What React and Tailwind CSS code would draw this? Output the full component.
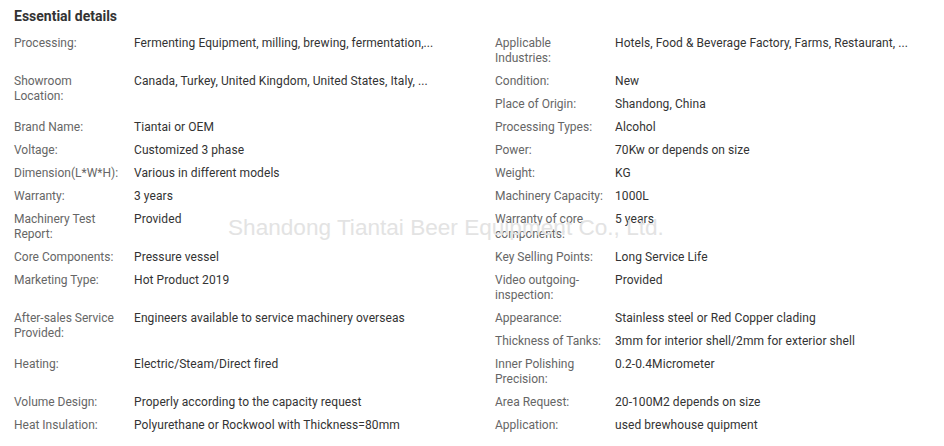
import React from "react";

const rows = [
  [
    [["Processing:", "Fermenting Equipment, milling, brewing, fermentation,..."]],
    [["Applicable Industries:", "Hotels, Food & Beverage Factory, Farms, Restaurant, ..."]],
  ],
  [
    [["Showroom Location:", "Canada, Turkey, United Kingdom, United States, Italy, ..."]],
    [
      ["Condition:", "New"],
      ["Place of Origin:", "Shandong, China"],
    ],
  ],
  [[["Brand Name:", "Tiantai or OEM"]], [["Processing Types:", "Alcohol"]]],
  [[["Voltage:", "Customized 3 phase"]], [["Power:", "70Kw or depends on size"]]],
  [[["Dimension(L*W*H):", "Various in different models"]], [["Weight:", "KG"]]],
  [[["Warranty:", "3 years"]], [["Machinery Capacity:", "1000L"]]],
  [[["Machinery Test Report:", "Provided"]], [["Warranty of core components:", "5 years"]]],
  [[["Core Components:", "Pressure vessel"]], [["Key Selling Points:", "Long Service Life"]]],
  [[["Marketing Type:", "Hot Product 2019"]], [["Video outgoing-inspection:", "Provided"]]],
  [
    [["After-sales Service Provided:", "Engineers available to service machinery overseas"]],
    [
      ["Appearance:", "Stainless steel or Red Copper clading"],
      ["Thickness of Tanks:", "3mm for interior shell/2mm for exterior shell"],
    ],
  ],
  [[["Heating:", "Electric/Steam/Direct fired"]], [["Inner Polishing Precision:", "0.2-0.4Micrometer"]]],
  [[["Volume Design:", "Properly according to the capacity request"]], [["Area Request:", "20-100M2 depends on size"]]],
  [[["Heat Insulation:", "Polyurethane or Rockwool with Thickness=80mm"]], [["Application:", "used brewhouse quipment"]]],
];

function Item({ label, value }) {
  return (
    <div className="flex">
      <div className="w-[120px] shrink-0 pr-[10px] text-[#666]">{label}</div>
      <div className="flex-1 tracking-[0.07px] text-[#333]">{value}</div>
    </div>
  );
}

function Cell({ items }) {
  return (
    <div className="flex flex-col gap-2">
      {items.map(([l, v]) => (
        <Item key={l} label={l} value={v} />
      ))}
    </div>
  );
}

export default function App() {
  return (
    <div className="relative h-[446px] w-[944px] overflow-hidden bg-white pl-[14px] pt-[6px] font-['Roboto',sans-serif]">
      <h2 className="text-[14px] font-bold leading-[20px] text-[#333]">Essential details</h2>
      <div className="mt-[10px] flex flex-col gap-2 text-[12px] leading-[15px]">
        {rows.map(([left, right], i) => (
          <div key={i} className="grid grid-cols-[481px_481px]">
            <Cell items={left} />
            <Cell items={right} />
          </div>
        ))}
      </div>
      <div className="pointer-events-none absolute left-[228px] top-[213px] whitespace-nowrap font-['Liberation_Sans',Arial,sans-serif] text-[22.6px] leading-[30px] text-[#e3e3e3]">
        Shandong Tiantai Beer Equipment Co., Ltd.
      </div>
    </div>
  );
}
